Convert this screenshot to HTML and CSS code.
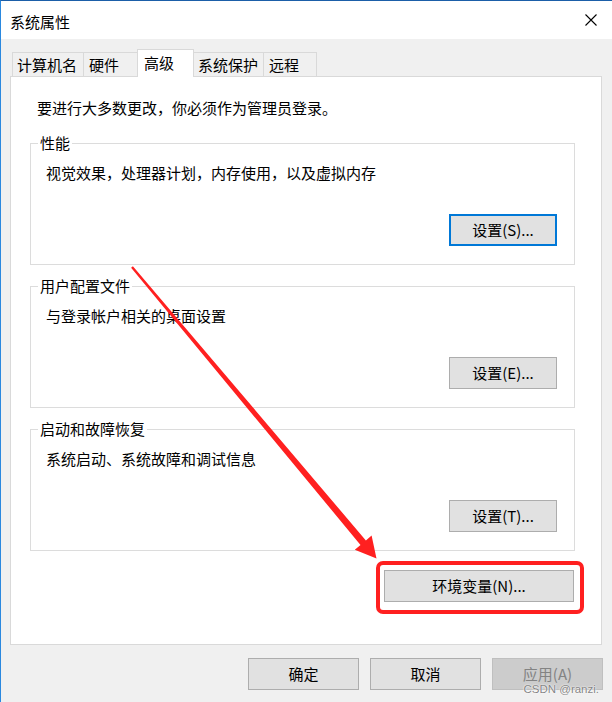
FILE: index.html
```html
<!DOCTYPE html>
<html lang="zh-CN">
<head>
<meta charset="utf-8">
<title>系统属性</title>
<link rel="stylesheet" href="styles.css">
</head>
<body>
<div class="window">
  <div class="titlebar">
    <span class="title">系统属性</span>
    <svg class="close" width="12" height="12" viewBox="0 0 12 12"><path d="M0.5 0.5 L11.5 11.5 M11.5 0.5 L0.5 11.5" stroke="#000" stroke-width="1.1" fill="none"/></svg>
  </div>
  <div class="content">
    <div class="tabs">
      <div class="tab t1">计算机名</div>
      <div class="tab t2">硬件</div>
      <div class="tab t3 selected">高级</div>
      <div class="tab t4">系统保护</div>
      <div class="tab t5">远程</div>
    </div>
    <div class="panel">
      <div class="intro">要进行大多数更改，你必须作为管理员登录。</div>
      <fieldset class="group">
        <legend>性能</legend>
        <div class="group-body">
          <div class="desc">视觉效果，处理器计划，内存使用，以及虚拟内存</div>
          <button class="btn small focused">设置(S)...</button>
        </div>
      </fieldset>
      <fieldset class="group">
        <legend>用户配置文件</legend>
        <div class="group-body">
          <div class="desc">与登录帐户相关的桌面设置</div>
          <button class="btn small">设置(E)...</button>
        </div>
      </fieldset>
      <fieldset class="group">
        <legend>启动和故障恢复</legend>
        <div class="group-body">
          <div class="desc">系统启动、系统故障和调试信息</div>
          <button class="btn small">设置(T)...</button>
        </div>
      </fieldset>
      <button class="btn env">环境变量(N)...</button>
    </div>
    <div class="actions">
      <button class="btn wide">确定</button>
      <button class="btn wide">取消</button>
      <button class="btn wide disabled">应用(A)</button>
    </div>
  </div>
  <svg class="annot" width="612" height="702" viewBox="0 0 612 702">
    <rect x="378" y="563" width="204" height="49" rx="5" ry="5" fill="none" stroke="#ff2020" stroke-width="4"/>
    <polygon fill="#ff2020" points="132.9,266.2 365.9,540.45 371.6,535.6 376.5,558.5 354.8,549.8 360.5,544.95 131.1,267.8"/>
  </svg>
  <div class="watermark">CSDN @ranzi.</div>
</div>
</body>
</html>
```
FILE: styles.css
```css
html, body {
  margin: 0;
  padding: 0;
  width: 612px;
  height: 702px;
  overflow: hidden;
  background: #f0f0f0;
}

.window {
  position: relative;
  box-sizing: border-box;
  width: 612px;
  height: 702px;
  border-top: 1px solid #1b5ea8;
  border-left: 1px solid #2a88df;
  background: #f0f0f0;
  font-family: "Noto Sans CJK SC", "Noto Sans", sans-serif;
  font-size: 15px;
  color: #000;
}

.titlebar {
  height: 38px;
  background: #fff;
  display: flex;
  align-items: center;
  padding-left: 9px;
}

.title {
  margin-top: 4px;
  line-height: 20px;
}

.close {
  margin-left: auto;
  margin-right: 15px;
  display: block;
}

.content {
  padding: 10px 10px 0 9px;
}

.tabs {
  display: flex;
  align-items: flex-end;
  height: 27px;
  margin-left: 2px;
  position: relative;
  z-index: 1;
}

.tab {
  box-sizing: border-box;
  height: 24px;
  border: 1px solid #d9d9d9;
  border-bottom: none;
  background: #f0f0f0;
  padding-left: 4px;
  line-height: 23px;
  white-space: nowrap;
  margin-left: -1px;
}

.t1 { width: 72px; margin-left: 0; }
.t2 { width: 55px; padding-left: 5px; }
.t3 { width: 57px; }
.t4 { width: 71px; }
.t5 { width: 54px; padding-left: 5px; }

.tab.selected {
  height: 28px;
  margin-bottom: -1px;
  background: #fff;
  position: relative;
  z-index: 2;
  padding-left: 6px;
  line-height: 25px;
}

.panel {
  box-sizing: border-box;
  width: 592px;
  height: 569px;
  background: #fff;
  border: 1px solid #d9d9d9;
  padding: 21px 26px 0 19px;
  display: flex;
  flex-direction: column;
}

.intro {
  line-height: 20px;
  margin-left: 7px;
  margin-bottom: 15px;
}

.group {
  margin: 0 0 11px 0;
  padding: 0;
  border: 1px solid #dcdcdc;
  min-width: 0;
}

.group legend {
  margin-left: 7px;
  padding: 0 2px;
  line-height: 20px;
}

.group-body {
  display: flex;
  flex-direction: column;
  padding: 10px 17px 18px 15px;
}

.desc {
  line-height: 20px;
}

.btn {
  box-sizing: border-box;
  height: 32px;
  background: #e1e1e1;
  border: 1px solid #adadad;
  font-family: "Noto Sans CJK SC", "Noto Sans", sans-serif;
  font-size: 15px;
  color: #000;
  padding: 0;
  margin: 0;
  line-height: 30px;
  text-align: center;
}

.btn.small {
  width: 108px;
  align-self: flex-end;
  margin-top: 31px;
}

.btn.focused {
  border: 2px solid #0078d7;
  line-height: 28px;
}

.btn.env {
  width: 190px;
  align-self: flex-end;
  margin-top: 8px;
  margin-right: 1px;
}

.actions {
  display: flex;
  justify-content: flex-end;
  gap: 11px;
  margin-top: 13px;
  margin-right: -1px;
}

.btn.wide {
  width: 111px;
}

.btn.disabled {
  background: #cccccc;
  border-color: #bfbfbf;
  color: #838383;
}

.annot {
  position: absolute;
  left: -1px;
  top: -1px;
  pointer-events: none;
}

.watermark {
  position: absolute;
  right: 13px;
  top: 681px;
  font-family: "Liberation Sans", Arial, sans-serif;
  font-size: 11.5px;
  line-height: 14px;
  color: rgba(110, 110, 110, 0.85);
  text-shadow: 0 0 2px #fff, 0 0 1px #fff;
}
```
